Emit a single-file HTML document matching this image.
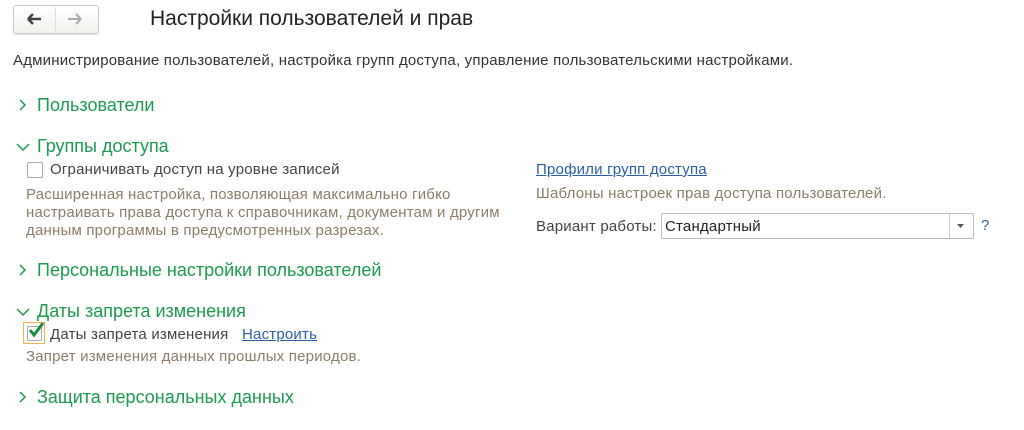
<!DOCTYPE html><html><head><meta charset="utf-8"><style>
body{margin:0;width:1024px;height:430px;background:#fff;font-family:"Liberation Sans",Arial,sans-serif;position:relative;overflow:hidden;color:#333}
.a{position:absolute;white-space:nowrap;line-height:1}
.h{font-size:18px;color:#1c9a4e}
.t{font-size:15px;letter-spacing:0.2px;color:#444}
.g{font-size:15px;letter-spacing:0.2px;color:#8b7d66}
.l{font-size:15px;letter-spacing:0.2px;color:#2b5ea8;text-decoration:underline}
</style></head><body>
<div class="a" style="left:13px;top:5px;width:84px;height:27px;border:1px solid #c8c8c8;border-radius:3px;background:linear-gradient(#fff,#f2f2ee);box-shadow:0 1px 1px #ddd"></div>
<div class="a" style="left:55px;top:7px;width:1px;height:24px;background:#ddd"></div>
<svg class="a" style="left:25px;top:12px" width="70" height="14"><path d="M3 7H16M3 7L8 2M3 7L8 12" stroke="#444" stroke-width="2.5" fill="none"/><path d="M43 7H56M56 7L51 2M56 7L51 12" stroke="#aaa" stroke-width="2" fill="none"/></svg>
<div class="a" style="left:150px;top:8px;font-size:21px;color:#222">Настройки пользователей и прав</div>
<div class="a t" style="left:13px;top:53px;color:#333">Администрирование пользователей, настройка групп доступа, управление пользовательскими настройками.</div>

<svg class="a" style="left:18px;top:99px" width="10" height="12"><path d="M2 1L7 6L2 11" stroke="#1c9a4e" stroke-width="1.5" fill="none"/></svg>
<div class="a h" style="left:37px;top:96px">Пользователи</div>

<svg class="a" style="left:16px;top:142px" width="14" height="10"><path d="M1 2L7 8L13 2" stroke="#1c9a4e" stroke-width="1.5" fill="none"/></svg>
<div class="a h" style="left:37px;top:137px">Группы доступа</div>
<div class="a" style="left:27px;top:162px;width:14px;height:14px;border:1px solid #aaa;border-radius:2px;background:#fff"></div>
<div class="a t" style="left:50px;top:162px">Ограничивать доступ на уровне записей</div>
<div class="a g" style="left:26px;top:186px;line-height:18px">Расширенная настройка, позволяющая максимально гибко<br>настраивать права доступа к справочникам, документам и другим<br>данным программы в предусмотренных разрезах.</div>

<div class="a l" style="left:536px;top:162px">Профили групп доступа</div>
<div class="a g" style="left:536px;top:186px">Шаблоны настроек прав доступа пользователей.</div>
<div class="a t" style="left:536px;top:219px">Вариант работы:</div>
<div class="a" style="left:661px;top:213px;width:311px;height:24px;border:1px solid #bbb;border-radius:2px;background:#fff"></div>
<div class="a" style="left:949px;top:214px;width:1px;height:24px;background:#ccc"></div>
<svg class="a" style="left:957px;top:224px" width="8" height="5"><path d="M0 0H7L3.5 4Z" fill="#555"/></svg>
<div class="a t" style="left:665px;top:219px;color:#222">Стандартный</div>
<div class="a" style="left:981px;top:218px;font-size:15px;color:#2b5ea8">?</div>

<svg class="a" style="left:18px;top:264px" width="10" height="12"><path d="M2 1L7 6L2 11" stroke="#1c9a4e" stroke-width="1.5" fill="none"/></svg>
<div class="a h" style="left:37px;top:261px">Персональные настройки пользователей</div>

<svg class="a" style="left:16px;top:307px" width="14" height="10"><path d="M1 2L7 8L13 2" stroke="#1c9a4e" stroke-width="1.5" fill="none"/></svg>
<div class="a h" style="left:37px;top:302px">Даты запрета изменения</div>
<div class="a" style="left:23px;top:322px;width:22px;height:22px;border:1px solid #f0b24a;box-sizing:border-box"></div>
<div class="a" style="left:27px;top:326px;width:13px;height:13px;border:1px solid #aaa;border-radius:2px;background:#fff"></div>
<svg class="a" style="left:27px;top:321px" width="18" height="18"><path d="M3 9L7 14L16 2" stroke="#1c8a3e" stroke-width="3" fill="none"/></svg>
<div class="a t" style="left:50px;top:327px">Даты запрета изменения</div>
<div class="a l" style="left:242px;top:327px">Настроить</div>
<div class="a g" style="left:26px;top:349px">Запрет изменения данных прошлых периодов.</div>

<svg class="a" style="left:18px;top:391px" width="10" height="12"><path d="M2 1L7 6L2 11" stroke="#1c9a4e" stroke-width="1.5" fill="none"/></svg>
<div class="a h" style="left:37px;top:388px">Защита персональных данных</div>
</body></html>
